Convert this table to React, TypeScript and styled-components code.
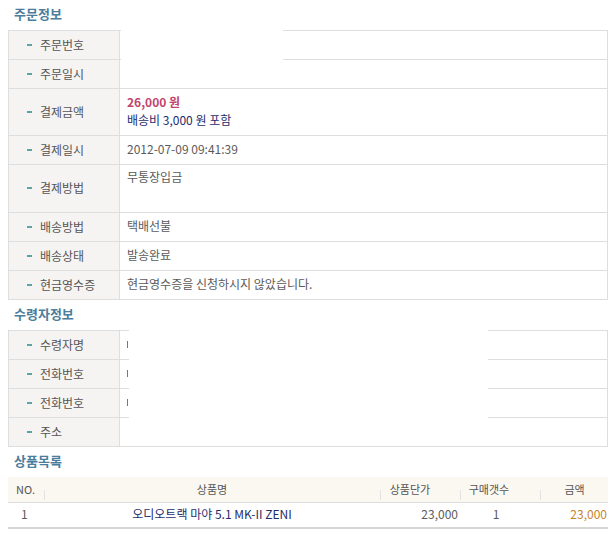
import React from 'react';
import styled, {createGlobalStyle} from 'styled-components';

const GlobalStyle = createGlobalStyle`
  body {
    margin: 0;
    background: #fff;
    font-family: "Noto Sans CJK KR", "Noto Sans", sans-serif;
    font-size: 12px;
    color: #5b5b5b;
  }
`;

type InfoRowData = {
    label: string;
    height?: number;
    top?: boolean;
    value?: React.ReactNode;
};

export default function App() {
    const orderRows: InfoRowData[] = [
        {label: '주문번호'},
        {label: '주문일시'},
        {
            label: '결제금액',
            height: 46,
            value: (
                <>
                    <Price>26,000 원</Price>
                    <Shipping>배송비 3,000 원 포함</Shipping>
                </>
            ),
        },
        {label: '결제일시', value: '2012-07-09 09:41:39'},
        {label: '결제방법', height: 47, top: true, value: '무통장입금'},
        {label: '배송방법', value: '택배선불'},
        {label: '배송상태', value: '발송완료'},
        {label: '현금영수증', value: '현금영수증을 신청하시지 않았습니다.'},
    ];

    const receiverRows: InfoRowData[] = [
        {label: '수령자명', value: <Cut/>},
        {label: '전화번호', value: <Cut/>},
        {label: '전화번호', value: <Cut/>},
        {label: '주소'},
    ];

    return (
        <Page>
            <GlobalStyle/>
            <SectionTitle>주문정보</SectionTitle>
            <InfoTable>
                {orderRows.map((r, i) => (
                    <InfoRow key={i} $h={r.height ?? 28}>
                        <Label><Dash/>{r.label}</Label>
                        <Value $top={r.top}>{r.value}</Value>
                    </InfoRow>
                ))}
                <Redact $left={112} $top={-1} $w={162} $h={30}/>
                <Redact $left={111} $top={159} $w={6} $h={13}/>
            </InfoTable>

            <SectionTitle>수령자정보</SectionTitle>
            <InfoTable>
                {receiverRows.map((r, i) => (
                    <InfoRow key={i} $h={28}>
                        <Label><Dash/>{r.label}</Label>
                        <Value>{r.value}</Value>
                    </InfoRow>
                ))}
                <Redact $left={120} $top={-1} $w={359} $h={88}/>
            </InfoTable>

            <SectionTitle>상품목록</SectionTitle>
            <ProductTable>
                <HeadRow>
                    <HeadCell $align="left" $pl={8}>NO.</HeadCell>
                    <HeadCell $sep>상품명</HeadCell>
                    <HeadCell $sep $pr={20}>상품단가</HeadCell>
                    <HeadCell $sep $pr={22}>구매갯수</HeadCell>
                    <HeadCell $sep $pl={2}>금액</HeadCell>
                </HeadRow>
                <DataRow>
                    <DataCell $align="left" $pl={13}>1</DataCell>
                    <DataCell><ProductName>오디오트랙 마야 5.1 MK-II ZENI</ProductName></DataCell>
                    <DataCell $align="right" $pr={2}>23,000</DataCell>
                    <DataCell $pr={8}>1</DataCell>
                    <DataCell $align="right"><Total>23,000</Total></DataCell>
                </DataRow>
            </ProductTable>
        </Page>
    );
}

const Page = styled.div`
  width: 600px;
  padding: 0 8px;
`
const SectionTitle = styled.h3`
  margin: 0;
  height: 30px;
  line-height: 28px;
  padding-left: 6px;
  font-size: 13px;
  font-weight: 700;
  color: #4b7d9c;
`
const InfoTable = styled.div`
  position: relative;
  display: flex;
  flex-direction: column;
  border: 1px solid #dedede;
  border-bottom: none;
`
const InfoRow = styled.div<{ $h: number }>`
  display: grid;
  grid-template-columns: 111px 1fr;
  min-height: ${p => p.$h}px;
  border-bottom: 1px solid #dedede;
`
const Label = styled.div`
  display: flex;
  align-items: center;
  padding: 0 0 2px 18px;
  background: #f5f4f2;
  border-right: 1px solid #dedede;
  color: #555;
`
const Dash = styled.span`
  display: inline-block;
  width: 5px;
  height: 2px;
  margin: 1px 8px 0 0;
  background: #5fa3a3;
`
const Value = styled.div<{ $top?: boolean }>`
  display: flex;
  flex-direction: column;
  justify-content: ${p => (p.$top ? 'flex-start' : 'center')};
  padding: ${p => (p.$top ? '3px 7px 0' : '0 7px 2px')};
  line-height: 18px;
  color: #5b5b5b;
`
const Price = styled.span`
  font-weight: 700;
  color: #c2456e;
`
const Shipping = styled.span`
  color: #1f2d6b;
`
const Cut = styled.span`
  display: block;
  width: 1px;
  height: 7px;
  background: #777;
`
const Redact = styled.div<{ $left: number; $top: number; $w: number; $h: number }>`
  position: absolute;
  left: ${p => p.$left}px;
  top: ${p => p.$top}px;
  width: ${p => p.$w}px;
  height: ${p => p.$h}px;
  background: #fff;
`
const ProductTable = styled.div`
  display: flex;
  flex-direction: column;
  border-bottom: 2px solid #d6d6d6;
`
const HeadRow = styled.div`
  display: grid;
  grid-template-columns: 36px 336px 80px 80px 67px;
  height: 26px;
  background: #fbf8f1;
  border-bottom: 1px solid #dcdcdc;
  box-sizing: border-box;
`
const HeadCell = styled.div<{ $align?: string; $pl?: number; $pr?: number; $sep?: boolean }>`
  position: relative;
  display: flex;
  align-items: center;
  justify-content: ${p => (p.$align === 'left' ? 'flex-start' : 'center')};
  padding-left: ${p => p.$pl ?? 0}px;
  padding-right: ${p => p.$pr ?? 0}px;
  padding-bottom: 1px;
  font-size: 11px;
  color: #555;

  &::before {
    content: "";
    display: ${p => (p.$sep ? 'block' : 'none')};
    position: absolute;
    left: 0;
    bottom: 2px;
    width: 1px;
    height: 10px;
    background: #e2e2e2;
  }
`
const DataRow = styled.div`
  display: grid;
  grid-template-columns: 36px 336px 80px 80px 67px;
  height: 24px;
`
const DataCell = styled.div<{ $align?: string; $pl?: number; $pr?: number }>`
  display: flex;
  align-items: center;
  justify-content: ${p => (p.$align === 'left' ? 'flex-start' : p.$align === 'right' ? 'flex-end' : 'center')};
  padding-left: ${p => p.$pl ?? 0}px;
  padding-right: ${p => p.$pr ?? 0}px;
  padding-bottom: 3px;
  color: #5b5b5b;
`
const ProductName = styled.span`
  color: #1f2d6b;
`
const Total = styled.span`
  color: #c8842c;
`
